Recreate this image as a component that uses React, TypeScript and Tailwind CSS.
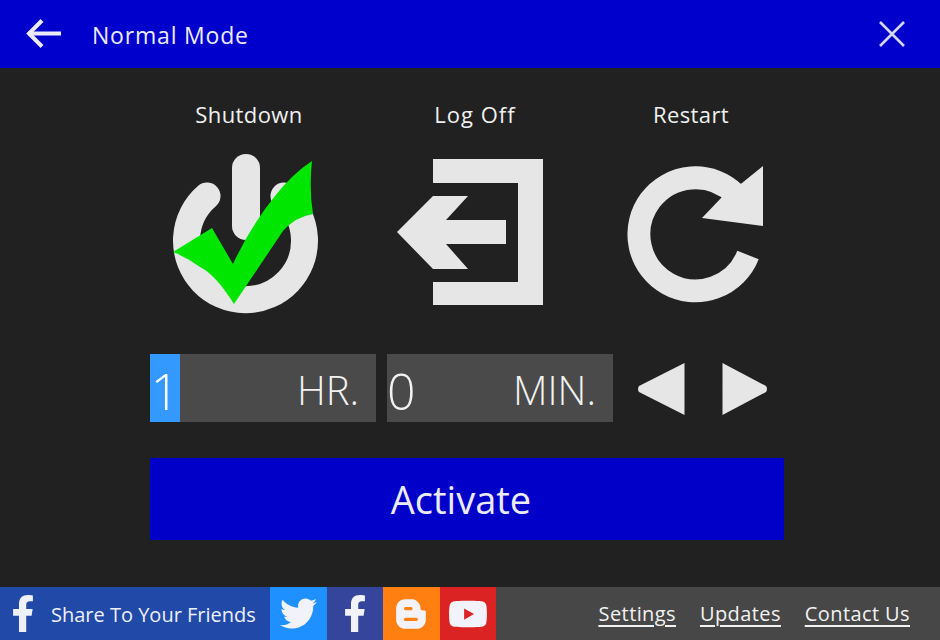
import React from "react";
import { FaBloggerB, FaFacebookF, FaTwitter, FaYoutube } from "react-icons/fa";

const font = "font-['Open_Sans','Noto_Sans',sans-serif]";

// the svg viewBoxes below use page pixels, so shapes can be read off the reference directly
const PowerIcon = () => (
  <svg viewBox="170 150 150 165" className="w-[150px] h-[165px]">
    <path
      d="M207 197 A59 59 0 1 0 284 197"
      fill="none"
      stroke="#e6e6e6"
      strokeWidth="27"
      strokeLinecap="round"
    />
    <rect x="232" y="155" width="28" height="86" rx="14" fill="#e6e6e6" />
    <path
      d="M173 253 L212 229 L233 265 Q250 228 275 197 Q292 175 312 162 Q309 190 313 215 Q295 218 283 232 L234 305 Q215 275 200 268 Q186 258 173 253 Z"
      fill="#00e600"
    />
  </svg>
);

const LogOffIcon = () => (
  <svg viewBox="395 158 150 150" className="w-[150px] h-[150px]">
    <path
      d="M433 160 H543 V306 H433 V283 H518 V184 H433 Z"
      fill="#e6e6e6"
    />
    <path
      d="M397 233 L433 197 H468 L446 221 H506 V245 H446 L468 270 H433 Z"
      fill="#e6e6e6"
    />
  </svg>
);

const RestartIcon = () => (
  <svg viewBox="625 165 140 140" className="w-[140px] h-[140px]">
    <path
      d="M748 256 A56.5 56.5 0 1 1 735 195"
      fill="none"
      stroke="#e6e6e6"
      strokeWidth="23"
    />
    <path d="M763 167 V227 L702 219 L722 198 L742 184 Z" fill="#e6e6e6" />
  </svg>
);

const Triangle = ({ flip }: { flip?: boolean }) => (
  <svg
    viewBox="0 0 47 54"
    preserveAspectRatio="none"
    className={flip ? "w-[45px] h-[54px] rotate-180" : "w-[47px] h-[54px]"}
  >
    <path
      d="M46.5 1 V53 L1 30 Q-1 27 1 24 Z"
      fill="#e6e6e6"
    />
  </svg>
);

const TimeField = ({
  value,
  unit,
  selected,
}: {
  value: string;
  unit: string;
  selected?: boolean;
}) => (
  <div className="w-[226px] h-[68px] bg-[#4a4a4a] flex items-stretch justify-between text-[40px] font-light text-[#f2f2f2]">
    <span
      className={
        selected
          ? "bg-[#3399ff] w-[30px] flex items-center justify-center pt-[7px] text-[50px] text-white"
          : "flex items-center pl-0 pt-[7px] text-[50px]"
      }
    >
      {value}
    </span>
    <span className="flex items-center pr-[17px] pt-[3px]">{unit}</span>
  </div>
);

const SocialTile = ({
  color,
  children,
}: {
  color: string;
  children: React.ReactNode;
}) => (
  <div className={`w-[56.5px] h-full flex items-center justify-center text-[#f2f2fa] ${color}`}>
    {children}
  </div>
);

export default function App() {
  return (
    <div className={`w-[940px] h-[640px] bg-[#212121] flex flex-col overflow-hidden ${font}`}>
      <header className="h-[68px] shrink-0 bg-[#0000cd] flex items-center pl-[26px] pr-[35px] text-[#ecebfb]">
        <svg viewBox="0 0 36 30" className="w-[36px] h-[30px]" fill="none" stroke="currentColor" strokeWidth="4">
          <path d="M2 14.5 H35" />
          <path d="M16 1.5 L3 14.5 L16 27.5" />
        </svg>
        <span className="ml-[30px] pt-[3px] text-[23px] tracking-[0.8px]">Normal Mode</span>
        <svg viewBox="0 0 26 26" className="w-[26px] h-[26px] ml-auto" fill="none" stroke="#d5d5f5" strokeWidth="2.6">
          <path d="M1 1 L25 25 M25 1 L1 25" />
        </svg>
      </header>

      <main className="flex-1 flex flex-col pl-[150px]">
        <div className="flex mt-[30px] text-[#f0f0f0] text-[22px] leading-[32px] h-[33px] tracking-[0.4px]">
          <span className="w-[198px] text-center">Shutdown</span>
          <span className="w-[254px] text-center tracking-[1px]">Log Off</span>
          <span className="w-[178px] text-center">Restart</span>
        </div>
        <div className="flex items-start">
          <div className="ml-[20px] mt-[18px]">
            <PowerIcon />
          </div>
          <div className="ml-[75px] mt-[26px]">
            <LogOffIcon />
          </div>
          <div className="ml-[80px] mt-[33px]">
            <RestartIcon />
          </div>
        </div>
        <div className="flex items-center mt-[40px] text-[#f2f2f2]">
          <TimeField value="1" unit="HR." selected />
          <div className="ml-[11px]">
            <TimeField value="0" unit="MIN." />
          </div>
          <div className="ml-[25px] mt-[2px]">
            <Triangle />
          </div>
          <div className="ml-[37px] mt-[2px]">
            <Triangle flip />
          </div>
        </div>
        <button className="mt-[36px] w-[634px] h-[82px] pr-[12px] bg-[#0000c8] text-[#ecebfb] text-[38px]">
          Activate
        </button>
      </main>

      <footer className="h-[53px] shrink-0 bg-[#474747] flex items-center">
        <div className="w-[270px] h-full bg-[#2149a8] flex items-center text-[#eef0fa]">
          <FaFacebookF className="w-[36px] h-[37px] ml-[5px]" />
          <span className="ml-[10px] pt-[3px] text-[20px] whitespace-nowrap">Share To Your Friends</span>
        </div>
        <SocialTile color="bg-[#1e90ff]">
          <FaTwitter className="w-[37px] h-[37px]" />
        </SocialTile>
        <SocialTile color="bg-[#35459c]">
          <FaFacebookF className="w-[36px] h-[37px]" />
        </SocialTile>
        <SocialTile color="bg-[#ff8010]">
          <FaBloggerB className="w-[34px] h-[34px]" />
        </SocialTile>
        <SocialTile color="bg-[#dc2323]">
          <FaYoutube className="w-[40px] h-[40px]" />
        </SocialTile>
        <nav className="ml-auto mr-[30px] flex gap-[24px] text-[20px] tracking-[0.4px] text-[#f2f2f2] underline underline-offset-4">
          <a>Settings</a>
          <a>Updates</a>
          <a>Contact Us</a>
        </nav>
      </footer>
    </div>
  );
}
